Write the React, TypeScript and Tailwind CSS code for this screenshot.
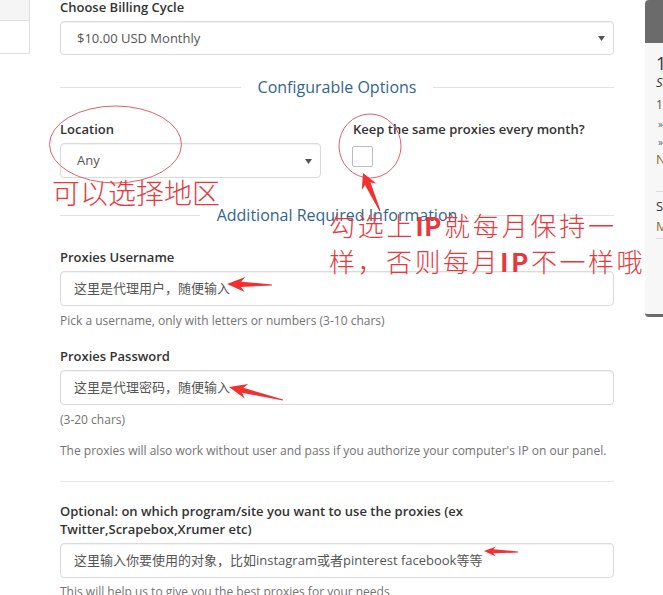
import React from "react";

type Pt = [number, number];

// tapered red callout arrow: thin tail widening into a solid head at the tip
function arrowPoints(tip: Pt, tail: Pt, len: number, half: number, neck: number) {
  const dx = tail[0] - tip[0];
  const dy = tail[1] - tip[1];
  const d = Math.hypot(dx, dy);
  const ux = dx / d;
  const uy = dy / d;
  const nx = -uy;
  const ny = ux;
  const at = (s: number, w: number): string =>
    `${(tip[0] + ux * s + nx * w).toFixed(1)},${(tip[1] + uy * s + ny * w).toFixed(1)}`;
  return [
    at(0, 0),
    at(len, half),
    at(len * 0.78, neck),
    at(d, 0.6),
    at(d, -0.6),
    at(len * 0.78, -neck),
    at(len, -half),
  ].join(" ");
}

function SubHeading({ title, className }: { title: string; className: string }) {
  return (
    <div className={`flex items-center gap-[17px] ${className}`}>
      <div className="h-px flex-1 bg-[#e2e2e2]" />
      <span className="text-[16px] leading-[22px] text-[#32668f]">{title}</span>
      <div className="h-px flex-1 bg-[#e2e2e2]" />
    </div>
  );
}

function Caret() {
  return (
    <svg width="7" height="5" viewBox="0 0 7 5" className="shrink-0">
      <path d="M0 0h7L3.5 5z" fill="#555" />
    </svg>
  );
}

function Label({ children, className = "" }: { children: React.ReactNode; className?: string }) {
  return (
    <div className={`text-[13px] leading-[18px] font-semibold text-[#333] ${className}`}>{children}</div>
  );
}

function Field({ value }: { value: string }) {
  return (
    <div className="mt-[5px] flex h-[35px] items-center rounded-[4px] border border-[#dadada] bg-white pl-[13px] text-[13px] text-[#555] shadow-[inset_0_1px_1px_rgba(0,0,0,0.06)]">
      {value}
    </div>
  );
}

function Help({ children, className = "" }: { children: React.ReactNode; className?: string }) {
  return <div className={`text-[12px] leading-[16px] text-[#737373] ${className}`}>{children}</div>;
}

export default function App() {
  return (
    <div className="relative h-[595px] w-[663px] overflow-hidden bg-white font-['Open_Sans','Noto_Sans_CJK_SC',sans-serif]">
      <div className="flex items-start">
        {/* categories panel, mostly off-screen */}
        <div className="h-[54px] w-[30px] shrink-0 border-r border-b border-[#e0e0e0]">
          <div className="h-[21px] border-b border-[#e0e0e0] bg-[#f5f5f5]" />
        </div>

        <main className="ml-[30px] w-[554px] shrink-0">
          <Label className="-mt-[2px]">Choose Billing Cycle</Label>
          <div className="mt-[5px] flex h-[34px] items-center justify-between rounded-[4px] border border-[#dadada] bg-white pl-[16px] pr-[8px] pt-[1px] text-[13px] text-[#555] shadow-[inset_0_1px_1px_rgba(0,0,0,0.06)]">
            <span>$10.00 USD Monthly</span>
            <Caret />
          </div>

          <SubHeading title="Configurable Options" className="mt-[21px]" />

          <div className="mt-[22px] flex">
            <div className="w-[261px]">
              <Label>Location</Label>
              <div className="mt-[5px] flex h-[35px] items-center justify-between rounded-[4px] border border-[#dadada] bg-white pl-[16px] pr-[8px] pt-[1px] text-[13px] text-[#555] shadow-[inset_0_1px_1px_rgba(0,0,0,0.06)]">
                <span>Any</span>
                <Caret />
              </div>
            </div>
            <div className="ml-[32px]">
              <Label>Keep the same proxies every month?</Label>
              <div className="mt-[8px] ml-[-1px] h-[21px] w-[21px] rounded-[2px] border border-[#bdbdbd] bg-white" />
            </div>
          </div>

          <SubHeading title="Additional Required Information" className="mt-[26px]" />

          <Label className="mt-[22px]">Proxies Username</Label>
          <Field value="这里是代理用户，随便输入" />
          <Help className="mt-[7px]">Pick a username, only with letters or numbers (3-10 chars)</Help>

          <Label className="mt-[18px]">Proxies Password</Label>
          <Field value="这里是代理密码，随便输入" />
          <Help className="mt-[7px]">(3-20 chars)</Help>
          <Help className="mt-[15px]">
            The proxies will also work without user and pass if you authorize your computer's IP on our panel.
          </Help>

          <div className="mt-[22px] h-px bg-[#e6e6e6]" />

          <Label className="mt-[20px] pr-[130px]">
            Optional: on which program/site you want to use the proxies (ex Twitter,Scrapebox,Xrumer etc)
          </Label>
          <Field value="这里输入你要使用的对象，比如instagram或者pinterest facebook等等" />
          <Help className="mt-[6px]">This will help us to give you the best proxies for your needs</Help>
        </main>

        {/* order summary sidebar */}
        <aside className="ml-[31px] h-[317px] w-[220px] shrink-0 overflow-hidden whitespace-nowrap rounded-[4px] border-b-[3px] border-[#6b6b6b] bg-[#f7f7f7]">
          <div className="h-[43px] bg-[#6b6b6b]" />
          <div className="pl-[11px] pr-[10px]">
            <div className="pt-[10px] text-[18px] leading-[20px] text-[#333]">1 Private Proxy</div>
            <div className="text-[13px] leading-[18px] italic text-[#333]">Shared Proxies</div>
            <div className="mt-[6px] text-[12px] leading-[16px] text-[#555]">1 x Proxy</div>
            <div className="mt-[3px] pl-[2px] text-[10px] leading-[16px] text-[#666]">» Location: Any</div>
            <div className="mt-[2px] pl-[2px] text-[10px] leading-[16px] text-[#666]">» Keep the same proxies</div>
            <div className="mt-[1px] text-[13px] leading-[16px] text-[#8a6d3b]">No setup fee</div>
            <div className="mt-[24px] h-px bg-[#dcdcdc]" />
            <div className="mt-[6px] text-[13px] leading-[16px] text-[#333]">Setup Fees:</div>
            <div className="mt-[4px] text-[13px] leading-[16px] text-[#8a6d3b]">Monthly:</div>
            <div className="mt-[4px] h-px bg-[#dcdcdc]" />
          </div>
        </aside>
      </div>

      {/* red hand-made notes laid over the form */}
      <div className="pointer-events-none absolute inset-0">
        <svg width="663" height="595" className="absolute left-0 top-0">
          <ellipse cx="115.5" cy="144.5" rx="66" ry="38.5" fill="none" stroke="#e2606b" strokeWidth="1" />
          <ellipse cx="370" cy="146" rx="31" ry="32" fill="none" stroke="#e2606b" strokeWidth="1" />
          <g fill="#f2302f">
            <polygon points={arrowPoints([363, 173], [380, 211], 15, 8, 3)} />
            <polygon points={arrowPoints([227, 284], [272, 285], 18, 7.5, 2.6)} />
            <polygon points={arrowPoints([229, 387], [283, 400], 18, 7.5, 2.6)} />
            <polygon points={arrowPoints([484, 551], [518, 552], 12, 5, 2)} />
          </g>
        </svg>

        <div className="absolute left-[52px] top-[176px] text-[28px] leading-[32px] font-light text-[#e8383d] font-['Noto_Sans_CJK_SC',sans-serif]">
          可以选择地区
        </div>

        <div className="absolute left-[329px] top-[207px] text-[26px] leading-[36px] font-light text-[#e8383d] font-['Noto_Sans_CJK_SC',sans-serif]">
          <div className="w-[285px] text-justify [text-align-last:justify]">
            勾选上<b className="font-bold">IP</b>就每月保持一
          </div>
          <div className="tracking-[2.5px]">
            样，否则每月<b className="font-bold">IP</b>不一样哦
          </div>
        </div>
      </div>
    </div>
  );
}
